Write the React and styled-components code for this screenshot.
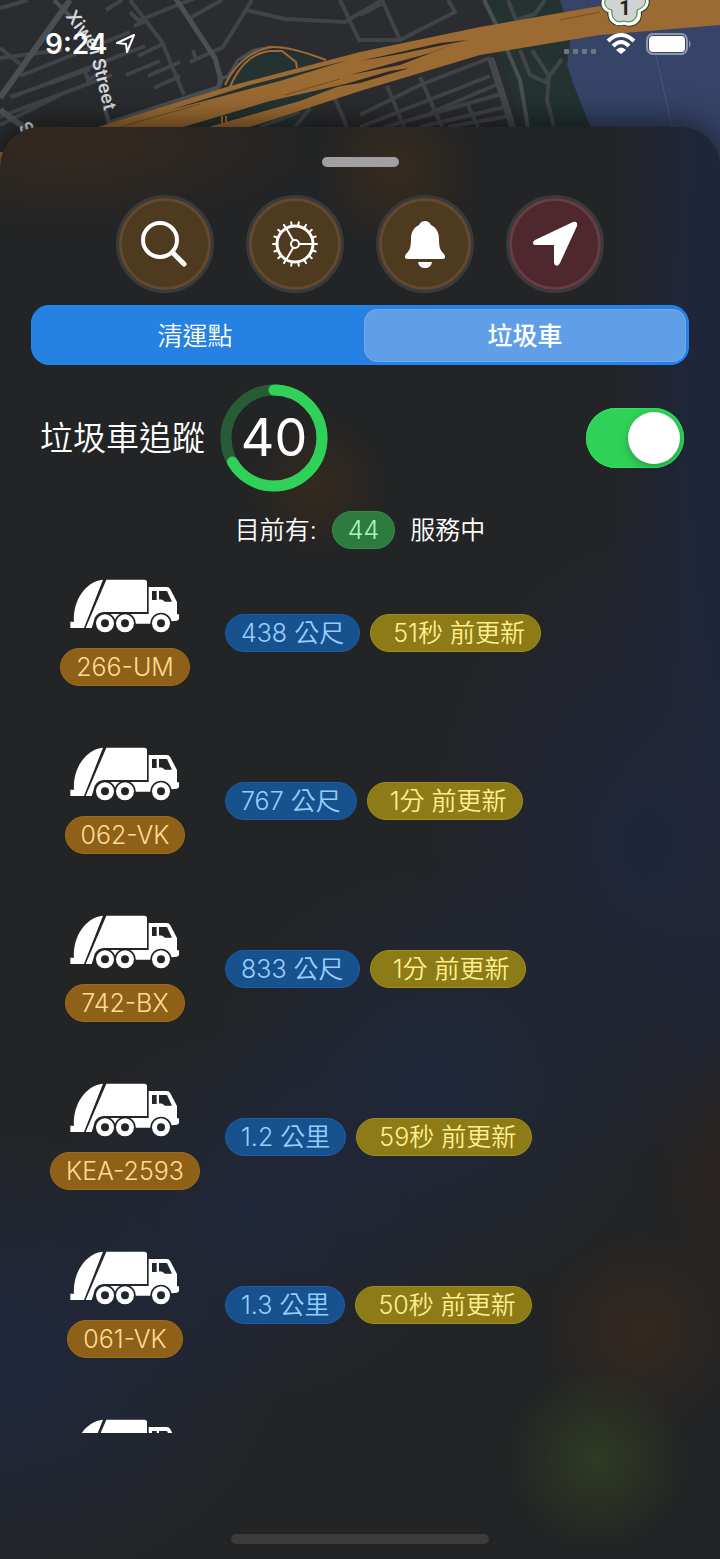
import React, { useId, useState } from "react";
import styled, { createGlobalStyle, css } from "styled-components";

const GlobalStyle = createGlobalStyle`
  *, *::before, *::after { box-sizing: border-box; }
  html, body { margin: 0; background: #232526; }
  body {
    color: #fff;
    font-family: Inter, "Noto Sans CJK TC", sans-serif;
    font-size: 25px;
    font-weight: 350;
    line-height: 36px;
  }
  button { font: inherit; color: inherit; border: 0; padding: 0; cursor: pointer; }
`;

const Page = styled.div`
  display: flex;
  flex-direction: column;
  min-height: 100vh;
  overflow: hidden;
`;

const MapHeader = styled.header`
  position: relative;
  height: 172px;
  background: #2b2c2f;
`;

const MapDrawing = styled.svg`
  display: block;
  width: 100%;
  height: 100%;
`;

const StatusBar = styled.div`
  position: absolute;
  inset: 0 0 auto;
  display: flex;
  justify-content: space-between;
  align-items: center;
  height: 88px;
  padding: 0 28px 0 45px;
`;

const Clock = styled.div`
  display: flex;
  align-items: center;
  gap: 8px;
  font-size: 28px;
  font-weight: 600;
`;

const Indicators = styled.div`
  display: flex;
  align-items: flex-end;
  gap: 10px;
`;

const Sheet = styled.main`
  position: relative;
  flex: 1;
  display: flex;
  flex-direction: column;
  margin-top: -45px;
  border-radius: 40px 40px 0 0;
  box-shadow: 0 0 36px rgba(0, 0, 0, 0.7);
  background:
    radial-gradient(circle 90px at 83% 93%, #2f3b23, rgba(47, 59, 35, 0.5) 50%, rgba(47, 59, 35, 0)),
    radial-gradient(circle 100px at 89% 84%, #34281f, rgba(52, 40, 31, 0.5) 50%, rgba(52, 40, 31, 0)),
    radial-gradient(ellipse 80px 140px at 102% 73%, #2d251f, rgba(45, 37, 31, 0)),
    radial-gradient(circle 70px at 44% 25%, #352a1e, rgba(53, 42, 30, 0)),
    radial-gradient(circle 80px at 55% 3%, #372b1e, rgba(55, 43, 30, 0)),
    radial-gradient(ellipse 240px 90px at 10% 1%, #35291f, rgba(53, 41, 31, 0)),
    radial-gradient(ellipse 140px 900px at 103% 16%, #20263a 40%, rgba(32, 38, 58, 0)),
    radial-gradient(ellipse 300px 240px at 0% 86%, #20273a 20%, rgba(32, 39, 58, 0)),
    radial-gradient(ellipse 220px 200px at 35% 76%, #20273a, rgba(32, 39, 58, 0)),
    radial-gradient(ellipse 240px 230px at 60% 67%, #1f273a 10%, rgba(31, 39, 58, 0)),
    radial-gradient(ellipse 240px 340px at 90% 50%, #20263a 10%, rgba(32, 38, 58, 0)),
    #232425;
`;

const Grabber = styled.div`
  align-self: center;
  width: 77px;
  height: 10px;
  margin: 30px 0 28px;
  border-radius: 5px;
  background: #a29fa3;
`;

const Actions = styled.nav`
  display: flex;
  justify-content: center;
  gap: 32px;
`;

const RoundButton = styled.button`
  display: grid;
  place-items: center;
  width: 98px;
  height: 98px;
  border: 3px solid #393a3c;
  border-radius: 50%;
  background: ${(p) => (p.$accent ? "#4f282f" : "#4d3a1f")};
  box-shadow: inset 0 0 0 3px ${(p) => (p.$accent ? "#663c45" : "#62492f")};
`;

const Segments = styled.div`
  display: grid;
  grid-template-columns: 1fr 1fr;
  gap: 8px;
  height: 60px;
  margin: 12px 31px 0;
  padding: 3px 2px 2px;
  border: 1px solid #1d88f2;
  border-radius: 18px;
  background: #2581e2;
`;

const Segment = styled.button`
  border-radius: 14px;
  background: transparent;
  ${(p) =>
    p.$selected &&
    css`
      background: #609fe7;
      box-shadow: inset 0 0 0 1px #6fa9ea;
      font-weight: 500;
    `}
`;

const Tracking = styled.section`
  display: flex;
  align-items: center;
  margin-top: 19px;
  padding: 0 36px 0 40px;
`;

const TrackingLabel = styled.label`
  font-size: 33px;
  line-height: 48px;
`;

const Countdown = styled.div`
  position: relative;
  display: grid;
  place-items: center;
  width: 108px;
  height: 108px;
  margin: 0 auto 0 15px;
  font-size: 52px;
  font-weight: 400;
`;

const Ring = styled.svg`
  position: absolute;
  inset: 0;
`;

const Toggle = styled.input`
  appearance: none;
  display: flex;
  align-items: center;
  width: 98px;
  height: 60px;
  margin: 0;
  padding: 4px;
  border-radius: 30px;
  background: #636366;
  cursor: pointer;

  &::before {
    content: "";
    width: 52px;
    height: 52px;
    border-radius: 50%;
    background: #fff;
    box-shadow: 0 3px 8px rgba(0, 0, 0, 0.25);
  }
  &:checked {
    justify-content: flex-end;
    background: #30d158;
    box-shadow: inset 0 0 0 1px #2be45b;
  }
`;

const tones = {
  green: ["#2d7b3f", "#338d48", "#aef5bb"],
  orange: ["#8f6018", "#9f6a19", "#ffdd94"],
  blue: ["#18528e", "#1a5da5", "#93d0ff"],
  yellow: ["#8d7b18", "#a08c19", "#fff08f"],
};

const Pill = styled.span`
  display: inline-flex;
  align-items: center;
  height: 38px;
  padding: 0 15px;
  border: 1px solid ${(p) => tones[p.$tone][1]};
  border-radius: 19px;
  background: ${(p) => tones[p.$tone][0]};
  color: ${(p) => tones[p.$tone][2]};
  white-space: pre;
`;

const Summary = styled.p`
  display: flex;
  justify-content: center;
  align-items: center;
  gap: 15px;
  margin: 19px 0 0;
`;

const TruckList = styled.ul`
  display: flex;
  flex-direction: column;
  gap: 61px;
  height: 884px;
  margin: 0 0 126px;
  padding: 30px 40px 0;
  overflow: hidden;
  list-style: none;
`;

const TruckRow = styled.li`
  display: flex;
  align-items: center;
  gap: 15px;
`;

const Vehicle = styled.div`
  display: flex;
  flex-direction: column;
  align-items: center;
  gap: 15px;
  width: 170px;
`;

const Details = styled.div`
  display: flex;
  gap: 10px;
`;

const HomeIndicator = styled.div`
  position: absolute;
  bottom: 15px;
  left: 50%;
  width: 258px;
  height: 10px;
  margin-left: -129px;
  border-radius: 5px;
  background: #3b3b3b;
`;

function CityMap() {
  return (
    <MapDrawing viewBox="0 0 720 172" preserveAspectRatio="xMidYMin slice" aria-hidden="true">
      <rect width="720" height="172" fill="#2b2c2f" />
      <path d="M484 0H563L580 60L600 172H535Z" fill="#243332" />
      <path d="M560 0H720V172H610Q578 100 567 65L571 35Z" fill="#364467" />
      <path d="M648 20L675 140" stroke="#465784" />
      <path d="M225 85L250 58L285 50L330 62L350 60L300 130H200Z" fill="#243332" />
      <g fill="none" stroke="#414447" strokeWidth="4">
        <path d="M0 8L28 0M0 58L62 50M20 76L130 32M10 97L90 69M12 97L145 46M0 117L112 75M0 125L60 95M0 48L20 64M130 0L162 42L184 95M140 20L220 -12M126 75L160 61M138 56L165 43M148 76L180 62M154 88L180 76M190 18L222 0M106 10L122 0M130 12L142 24M134 26L144 22M84 68L88 80L98 74M193 50L196 60" />
        <path d="M252 0L223 47L190 62M246 10L285 19L345 22L382 0M340 0L360 42M360 15L383 3M382 0L400 40M360 40H400L455 12L448 0M508 0L516 20L535 14L545 0" />
        <path d="M360 115L420 85L490 58M360 127L490 76M385 127L505 93M420 127L505 107M448 127L510 116M387 86L404 127M420 77L442 127M468 105L478 127M430 113L498 84M310 108L295 127M335 99L347 127M260 127L300 112" />
        <path d="M520 50L530 75L545 82L562 59M532 50L549 76L547 100L554 127" />
      </g>
      <g fill="none" stroke="#4b4f52" strokeWidth="6">
        <path d="M70 0L0 98M0 110L28 130" />
        <path d="M54 0L72 18M104 105L110 127" strokeWidth="4" />
        <path d="M174 -4L215 58L221 80L218 88L110 123" strokeWidth="5" />
        <path d="M218 80L228 76L238 60L254 50L272 47" strokeWidth="3" />
        <path d="M484 0L496 24L520 80L528 127M492 58L514 127" strokeWidth="4" />
        <path d="M490 58L514 132" stroke="#44484a" />
      </g>
      <path
        d="M85 131L230 86L360 52L480 27L600 6L650 0H720V25L600 35L480 55L360 91L250 127L240 131Z"
        fill="#9c6b33"
      />
      <g fill="#243332">
        <path d="M170 110L250 85L348 60L280 81Z" />
        <path d="M180 128L270 101L345 84L300 101L205 128Z" />
        <path d="M360 61L440 43L468 40L400 54Z" fill="#2b2a28" />
        <path d="M350 75L430 53L462 41L400 65Z" fill="#2b2a28" />
        <path d="M335 87L390 71L410 68L360 83Z" fill="#2b2a28" />
      </g>
      <path d="M120 127L200 104M285 95L340 79M600 12L560 20" stroke="#6f4f2b" />
      <g fill="none" stroke="#9c6b33" strokeWidth="2">
        <path d="M225 85Q240 54 270 47Q290 46 326 60M230 87Q244 54 270 51H282L296 62L297 68M222 116V127M226 116V127" />
        <path d="M0 152V172" strokeWidth="6" />
      </g>
      <g fill="#d6d9dc" fontFamily="Inter, sans-serif" fontWeight="600" fontSize="18">
        <defs><path id="street-line" d="M65 16L88 47Q94 66 110 136" /></defs>
        <text><textPath href="#street-line">Xiwei Street</textPath></text>
        <text x="18" y="127" transform="rotate(55 18 127)">S</text>
      </g>
      <g>
        <path d="M606 -5C600 4 604 10 610 11C609 20 615 26 624 23C634 27 641 20 639 11C648 8 650 0 643 -5Z" fill="#d6d6d6" stroke="#2c3430" strokeWidth="5" />
        <path d="M606 -5C600 4 604 10 610 11C609 20 615 26 624 23C634 27 641 20 639 11C648 8 650 0 643 -5Z" fill="#d2d2d2" stroke="#fff" strokeWidth="3" />
        <path d="M607 -5C602 4 606 9 612 10C611 18 616 24 624 21C632 24 638 18 637 10C646 7 648 0 642 -5Z" fill="none" stroke="#27951f" strokeWidth="1" />
        <text x="625" y="15" textAnchor="middle" fill="#222" fontFamily="Roboto, sans-serif" fontWeight="700" fontSize="20">1</text>
      </g>
    </MapDrawing>
  );
}

function LocationOutline() {
  return (
    <svg width="20" height="20" viewBox="0 0 20 20" fill="none" stroke="#fff" strokeWidth="2" strokeLinejoin="round" aria-hidden="true">
      <path d="M1 9L18 1L11 18L10 10Z" />
    </svg>
  );
}

function SignalIcons() {
  return (
    <Indicators aria-hidden="true">
      <svg width="32" height="6" viewBox="0 0 32 6" fill="#6e7780">
        <rect width="5" height="5" rx="1" /><rect x="9" width="5" height="5" rx="1" />
        <rect x="18" width="5" height="5" rx="1" /><rect x="27" width="5" height="5" rx="1" />
      </svg>
      <svg width="30" height="22" viewBox="0 0 30 22" fill="none" stroke="#fff" strokeWidth="4">
        <path d="M2 8Q15 -4 28 8M7 13Q15 5 23 13" />
        <path d="M15 21L10 17Q15 12 20 17Z" fill="#fff" stroke="none" />
      </svg>
      <svg width="46" height="22" viewBox="0 0 46 22" fill="none">
        <rect x="1" y="1" width="40" height="20" rx="6" stroke="#8d97ad" strokeWidth="2" />
        <rect x="3" y="3" width="36" height="16" rx="4" fill="#fff" />
        <path d="M43 7Q46 11 43 15Z" fill="#8d97ad" />
      </svg>
    </Indicators>
  );
}

function SearchIcon() {
  return (
    <svg width="48" height="48" viewBox="0 0 48 48" fill="none" stroke="#fff" strokeLinecap="round">
      <circle cx="19" cy="20" r="17" strokeWidth="4" />
      <path d="M32 33L43 44" strokeWidth="5" />
    </svg>
  );
}

function GearIcon() {
  const teeth = Array.from({ length: 18 }, (_, i) => i * 20);
  return (
    <svg width="48" height="48" viewBox="-24 -24 48 48" fill="none" stroke="#fff" strokeLinecap="round">
      <circle r="18" strokeWidth="3" />
      <circle r="4" strokeWidth="2" />
      <path d="M5 0H18M-2 -4L-9 -16M-2 4L-9 16" strokeWidth="2" />
      {teeth.map((angle) => (
        <path key={angle} d="M19 0H22" strokeWidth="2" transform={`rotate(${angle})`} />
      ))}
    </svg>
  );
}

function BellIcon() {
  return (
    <svg width="42" height="48" viewBox="0 0 42 48" fill="#fff">
      <path d="M21 1Q25 1 27 5C33 8 35 13 35 19C35 29 37 31 40 34Q43 39 38 39H4Q-1 39 2 34C5 31 7 29 7 19C7 13 9 8 15 5Q17 1 21 1Z" />
      <path d="M14 42H28Q27 48 21 48T14 42Z" />
    </svg>
  );
}

function LocateIcon() {
  return (
    <svg width="48" height="48" viewBox="0 0 48 48" fill="#fff">
      <path d="M4 20L42 2Q47 1 46 6L29 43Q27 47 24 45Q23 44 23 42V25H5Q2 25 2 23Q2 21 4 20Z" />
    </svg>
  );
}

function TruckIcon() {
  const mask = useId();
  return (
    <svg width="110" height="54" viewBox="87 39 330 162" fill="#fff" role="img" aria-label="垃圾車">
      <mask id={mask} maskUnits="userSpaceOnUse" x="87" y="39" width="330" height="162">
        <rect x="87" y="39" width="330" height="162" fill="#fff" />
        <g fill="#000">
          <circle cx="192" cy="172" r="32" />
          <circle cx="252" cy="172" r="32" />
          <circle cx="360" cy="172" r="32" />
          <path d="M333 75H347V102H333ZM354 75H378L393 107H372Q365 100 354 100Z" />
        </g>
      </mask>
      <g mask={`url(#${mask})`}>
        <path d="M186 41L129 186H88V167H99C94 104 136 44 186 41Z" />
        <path d="M196 41H310Q318 41 318 49V138H190C172 138 161 150 158 167L152 186H134Z" />
        <path d="M200 144H326L334 173H200Z" />
        <path d="M323 63H378Q384 63 388 70L408 108V145H414V158Q413 163 408 164L392 166H323Z" />
      </g>
      <path fillRule="evenodd" d="M165 172a27 27 0 1 0 54 0a27 27 0 1 0-54 0ZM180 172a12 12 0 1 1 24 0a12 12 0 1 1-24 0ZM225 172a27 27 0 1 0 54 0a27 27 0 1 0-54 0ZM240 172a12 12 0 1 1 24 0a12 12 0 1 1-24 0ZM333 172a27 27 0 1 0 54 0a27 27 0 1 0-54 0ZM348 172a12 12 0 1 1 24 0a12 12 0 1 1-24 0Z" />
    </svg>
  );
}

const actions = [
  { label: "搜尋", Icon: SearchIcon },
  { label: "設定", Icon: GearIcon },
  { label: "通知", Icon: BellIcon },
  { label: "定位", Icon: LocateIcon, accent: true },
];

const trucks = [
  { plate: "266-UM", distance: "438 公尺", updated: "51秒 前更新" },
  { plate: "062-VK", distance: "767 公尺", updated: "1分 前更新" },
  { plate: "742-BX", distance: "833 公尺", updated: "1分 前更新" },
  { plate: "KEA-2593", distance: "1.2 公里", updated: "59秒 前更新" },
  { plate: "061-VK", distance: "1.3 公里", updated: "50秒 前更新" },
];

export default function App() {
  const [tab, setTab] = useState("垃圾車");
  const [tracking, setTracking] = useState(true);

  return (
    <Page>
      <GlobalStyle />
      <MapHeader>
        <CityMap />
        <StatusBar>
          <Clock>9:24<LocationOutline /></Clock>
          <SignalIcons />
        </StatusBar>
      </MapHeader>
      <Sheet>
        <Grabber />
        <Actions>
          {actions.map(({ label, Icon, accent }) => (
            <RoundButton key={label} type="button" aria-label={label} $accent={accent}>
              <Icon />
            </RoundButton>
          ))}
        </Actions>
        <Segments>
          {["清運點", "垃圾車"].map((name) => (
            <Segment
              key={name}
              type="button"
              aria-pressed={tab === name}
              $selected={tab === name}
              onClick={() => setTab(name)}
            >
              {name}
            </Segment>
          ))}
        </Segments>
        <Tracking>
          <TrackingLabel htmlFor="tracking">垃圾車追蹤</TrackingLabel>
          <Countdown>
            <Ring viewBox="0 0 108 108" fill="none" strokeWidth="11" aria-hidden="true">
              <circle cx="54" cy="54" r="48" stroke="#285c37" />
              <circle
                cx="54" cy="54" r="48" stroke="#30d158" strokeLinecap="round"
                pathLength="60" strokeDasharray="40 60" transform="rotate(-90 54 54)"
              />
            </Ring>
            40
          </Countdown>
          <Toggle
            id="tracking"
            type="checkbox"
            role="switch"
            checked={tracking}
            onChange={(e) => setTracking(e.target.checked)}
          />
        </Tracking>
        <Summary>
          目前有: <Pill $tone="green">44</Pill> 服務中
        </Summary>
        <TruckList>
          {trucks.map((truck) => (
            <TruckRow key={truck.plate}>
              <Vehicle>
                <TruckIcon />
                <Pill $tone="orange">{truck.plate}</Pill>
              </Vehicle>
              <Details>
                <Pill $tone="blue">{truck.distance}</Pill>
                <Pill $tone="yellow">{" " + truck.updated}</Pill>
              </Details>
            </TruckRow>
          ))}
          <TruckRow>
            <Vehicle>
              <TruckIcon />
            </Vehicle>
          </TruckRow>
        </TruckList>
        <HomeIndicator />
      </Sheet>
    </Page>
  );
}
